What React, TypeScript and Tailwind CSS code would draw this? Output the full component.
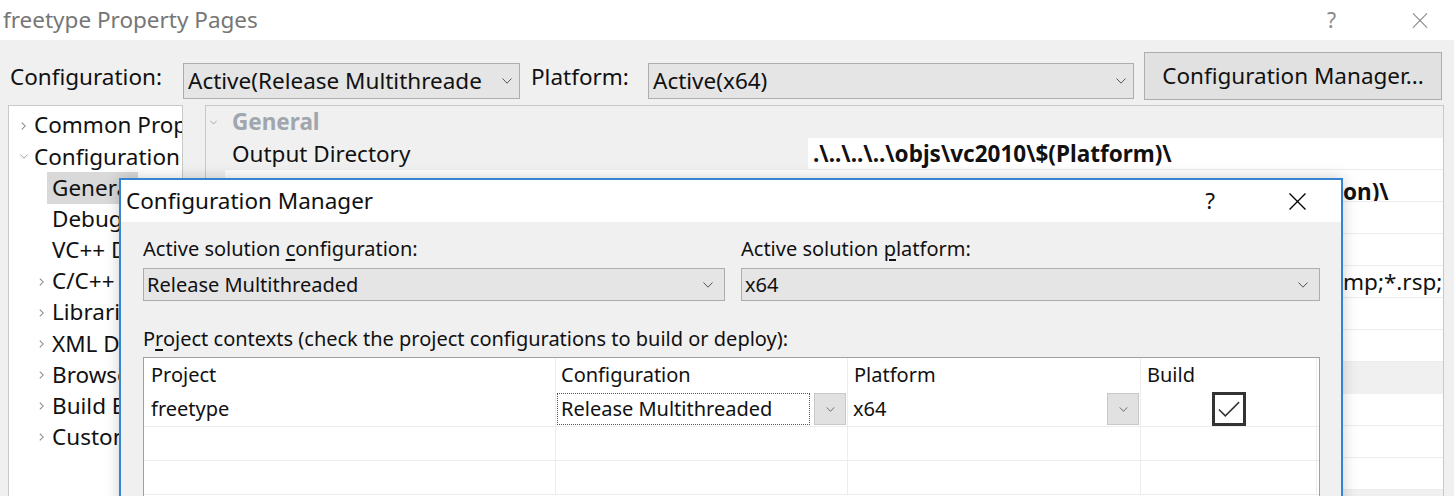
import * as React from 'react';

type IconProps = { className?: string };

const ChevronDown: React.FC<IconProps> = ({ className }) => (
	<svg viewBox="0 0 10 6" className={className} fill="none" stroke="currentColor" strokeWidth={1}>
		<polyline points="0.5,0.5 5,5.2 9.5,0.5" />
	</svg>
);

const ChevronRight: React.FC<IconProps> = ({ className }) => (
	<svg viewBox="0 0 5 9" className={className} fill="none" stroke="currentColor" strokeWidth={1.2}>
		<polyline points="0.6,0.6 4.4,4.5 0.6,8.4" />
	</svg>
);

const CloseIcon: React.FC<IconProps> = ({ className }) => (
	<svg viewBox="0 0 16 16" className={className} fill="none" stroke="currentColor" strokeWidth={1.2}>
		<line x1="0.5" y1="0.5" x2="15.5" y2="15.5" />
		<line x1="15.5" y1="0.5" x2="0.5" y2="15.5" />
	</svg>
);

const treeItems = [
	{ label: 'Common Properties', level: 0, kind: 'collapsed' },
	{ label: 'Configuration Properties', level: 0, kind: 'expanded' },
	{ label: 'General', level: 1, kind: 'leaf', selected: true },
	{ label: 'Debugging', level: 1, kind: 'leaf' },
	{ label: 'VC++ Directories', level: 1, kind: 'leaf' },
	{ label: 'C/C++', level: 1, kind: 'collapsed' },
	{ label: 'Librarian', level: 1, kind: 'collapsed' },
	{ label: 'XML Document Generator', level: 1, kind: 'collapsed' },
	{ label: 'Browse Information', level: 1, kind: 'collapsed' },
	{ label: 'Build Events', level: 1, kind: 'collapsed' },
	{ label: 'Custom Build Step', level: 1, kind: 'collapsed' },
];

// head is right-aligned in a fixed box so the tail starts just past the dialog's edge
const propertyRows = [
	{ name: 'Output Directory', value: '.\\..\\..\\..\\objs\\vc2010\\$(Platform)\\', bold: true, selected: true },
	{ name: 'Intermediate Directory', head: '.\\..\\..\\..\\objs\\vc2010\\$(Platform)\\$(Configurati', tail: 'on)\\', bold: true, low: true },
	{ name: 'Target Name', value: '$(ProjectName)' },
	{ name: 'Target Extension', value: '.lib' },
	{
		name: 'Extensions to Delete on Clean',
		head: '*.cdf;*.cache;*.obj;*.obj.enc;*.ilk;*.ipdb;*.iobj;*.resources;*.tlb;*.tli;*.tlh;*.t',
		tail: 'mp;*.rsp;*.pgc;*.pgd;*.meta;*.tlog',
	},
	{ name: 'Build Log File', value: '$(IntDir)$(MSBuildProjectName).log' },
	{ name: 'Platform Toolset', value: 'Visual Studio 2015 (v140)' },
	{ name: 'Project Defaults', category: true },
	{ name: 'Configuration Type', value: 'Static library (.lib)' },
	{ name: 'Use of MFC', value: 'Use Standard Windows Libraries' },
	{ name: 'Character Set', value: 'Use Multi-Byte Character Set' },
];

const ToolbarCombo = ({ text, className = '' }: { text: string; className?: string }) => (
	<div className={`flex h-[36px] items-center border border-[#adadad] bg-[#e5e5e5] ${className}`}>
		<span className="flex-1 overflow-hidden whitespace-nowrap pl-[4px] leading-[34px]">{text}</span>
		<ChevronDown className="ml-[2px] mr-[7px] h-[6px] w-[10px] shrink-0 text-[#555]" />
	</div>
);

const DialogCombo = ({ text }: { text: string }) => (
	<div className="flex h-[33px] items-center border border-[#adadad] bg-[#e5e5e5]">
		<span className="flex-1 overflow-hidden whitespace-nowrap pl-[3px] leading-[31px]">{text}</span>
		<ChevronDown className="mr-[11px] h-[6px] w-[10px] shrink-0 text-[#555]" />
	</div>
);

const GridDropButton = () => (
	<div className="flex h-[32px] w-[32px] shrink-0 items-center justify-center border border-[#c8c8c8] bg-[#e1e1e1]">
		<ChevronDown className="h-[5px] w-[9px] text-[#555]" />
	</div>
);

const TreePanel = () => (
	<div className="h-[400px] w-[175px] shrink-0 overflow-hidden border border-[#c8c8c8] bg-white pt-[4px] text-[22.5px]">
		{treeItems.map((item, index) => (
			<div key={index} className={`flex h-[31.2px] items-center whitespace-nowrap ${item.level === 0 ? 'pl-[10px]' : 'pl-[28px]'}`}>
				<span className="flex w-[9px] shrink-0 items-center justify-center text-[#888]">
					{item.kind === 'collapsed' && <ChevronRight className="h-[8px] w-[5px]" />}
					{item.kind === 'expanded' && <ChevronDown className="h-[5px] w-[8px]" />}
				</span>
				<span className={`ml-[1px] flex h-full items-center px-[5px] leading-none ${item.selected ? 'bg-[#d9d9d9] pr-[3px]' : ''}`}>
					{item.label}
				</span>
			</div>
		))}
	</div>
);

const PropertyPanel = () => (
	<div className="ml-[22px] h-[400px] w-[1239px] shrink-0 overflow-hidden border border-[#c8c8c8] bg-[#f0f0f0] text-[22.5px]">
		<div className="flex h-[32px] items-center">
			<ChevronDown className="ml-[4px] h-[5px] w-[7px] text-[#888]" />
			<span className="ml-[15px] font-bold text-[#a0a6ad]">General</span>
		</div>
		{propertyRows.map((row, index) => {
			if (row.category) {
				return (
					<div key={index} className="flex h-[32px] items-center">
						<ChevronDown className="ml-[4px] h-[5px] w-[7px] text-[#888]" />
						<span className="ml-[15px] font-bold text-[#a0a6ad]">{row.name}</span>
					</div>
				);
			}
			return (
				<div key={index} className="flex h-[32px] pl-[19px]">
					<div
						className={`flex w-[583px] shrink-0 items-center whitespace-nowrap border-b pl-[7px] ${
							row.selected ? 'border-[#f0f0f0] bg-[#f0f0f0]' : 'border-[#ececec] bg-white'
						} ${row.low ? 'pt-[12px]' : ''}`}
					>
						{row.name}
					</div>
					<div
						className={`flex flex-1 items-center overflow-hidden whitespace-nowrap border-b border-[#ececec] bg-white pl-[5px] ${
							row.bold ? 'font-bold' : ''
						} ${row.low ? 'pt-[12px]' : ''}`}
					>
						{row.tail ? (
							<>
								<span className="flex w-[530px] shrink-0 justify-end overflow-hidden">
									<span className="shrink-0">{row.head}</span>
								</span>
								<span>{row.tail}</span>
							</>
						) : (
							row.value
						)}
					</div>
				</div>
			);
		})}
	</div>
);

const ConfigurationManager = () => (
	<div className="absolute left-[119px] top-[178px] h-[340px] w-[1224px] border-2 border-[#3584d2] bg-[#f0f0f0] shadow-[0_0_14px_rgba(0,0,0,0.2)]">
		<div className="flex h-[42px] items-center bg-white pl-[5px] text-[22.5px]">
			<span>Configuration Manager</span>
			<span className="ml-auto leading-none">?</span>
			<CloseIcon className="ml-[74px] mr-[35px] h-[17px] w-[17px] text-black" />
		</div>
		<div className="pl-[22px] pr-[21px] pt-[12px] text-[20px]">
			<div className="grid grid-cols-[582px_579px] gap-x-[16px]">
				<div>
					<div className="leading-[30px]">
						Active solution <span className="underline underline-offset-[3px]">c</span>onfiguration:
					</div>
					<div className="mt-[4px]">
						<DialogCombo text="Release Multithreaded" />
					</div>
				</div>
				<div>
					<div className="leading-[30px]">
						Active solution <span className="underline underline-offset-[3px]">p</span>latform:
					</div>
					<div className="mt-[4px]">
						<DialogCombo text="x64" />
					</div>
				</div>
			</div>
			<div className="mt-[23px] leading-[30px]">
				P<span className="underline underline-offset-[3px]">r</span>oject contexts (check the project configurations to build or deploy):
			</div>
			<div className="mt-[3px] h-[150px] border border-[#a0a0a0] bg-white">
				<div className="flex h-[34px]">
					<div className="flex w-[412px] items-center border-r border-[#ededed] pl-[7px]">Project</div>
					<div className="flex w-[292px] items-center border-r border-[#ededed] pl-[5px]">Configuration</div>
					<div className="flex w-[293px] items-center border-r border-[#ededed] pl-[6px]">Platform</div>
					<div className="flex w-[176px] items-center border-r border-[#ededed] pl-[6px]">Build</div>
				</div>
				<div className="flex h-[35px] border-b border-[#ededed]">
					<div className="flex w-[412px] items-center border-r border-[#ededed] pl-[7px]">freetype</div>
					<div className="flex w-[292px] items-center border-r border-[#ededed] pl-[1px]">
						<div className="flex h-[32px] w-[253px] items-center border border-dotted border-[#555] pl-[3px]">Release Multithreaded</div>
						<div className="ml-[4px]">
							<GridDropButton />
						</div>
					</div>
					<div className="flex w-[293px] items-center border-r border-[#ededed] pl-[5px] pr-[1px]">
						<span>x64</span>
						<div className="ml-auto">
							<GridDropButton />
						</div>
					</div>
					<div className="flex w-[176px] items-center justify-center border-r border-[#ededed]">
						<div className="flex h-[34px] w-[34px] items-center justify-center border-[3px] border-[#333]">
							<svg viewBox="0 0 24 18" className="h-[17px] w-[22px]" fill="none" stroke="#333" strokeWidth={1.7}>
								<polyline points="1,9 8,16 23,1" />
							</svg>
						</div>
					</div>
				</div>
				{[0, 1].map((i) => (
					<div key={i} className="flex h-[34px] border-b border-[#ededed]">
						<div className="w-[412px] border-r border-[#ededed]" />
						<div className="w-[292px] border-r border-[#ededed]" />
						<div className="w-[293px] border-r border-[#ededed]" />
						<div className="w-[176px] border-r border-[#ededed]" />
					</div>
				))}
			</div>
		</div>
	</div>
);

export default function App() {
	return (
		<div className="relative h-[496px] w-[1454px] overflow-hidden bg-[#f0f0f0] font-['Noto_Sans',sans-serif] text-[#111]">
			<div className="flex h-[40px] items-center bg-white pl-[3px] text-[22.5px] text-[#767676]">
				<span>freetype Property Pages</span>
				<span className="ml-auto text-[21px] leading-none text-[#888]">?</span>
				<CloseIcon className="ml-[76px] mr-[26px] h-[15px] w-[16px] text-[#888]" />
			</div>
			<div className="mt-[12px] flex h-[48px] items-start pl-[10px] text-[22.5px]">
				<span className="mt-[10px] w-[173px] shrink-0 whitespace-nowrap leading-[30px]">Configuration:</span>
				<ToolbarCombo className="mt-[11px] w-[337px] shrink-0" text="Active(Release Multithreade" />
				<span className="ml-[11px] mt-[10px] w-[117px] shrink-0 leading-[30px]">Platform:</span>
				<ToolbarCombo className="mt-[11px] w-[486px] shrink-0" text="Active(x64)" />
				<button className="ml-[10px] h-[48px] w-[298px] shrink-0 border border-[#adadad] bg-[#e1e1e1] text-center">
					Configuration Manager...
				</button>
			</div>
			<div className="mt-[5px] flex pl-[8px]">
				<TreePanel />
				<PropertyPanel />
			</div>
			<ConfigurationManager />
		</div>
	);
}
